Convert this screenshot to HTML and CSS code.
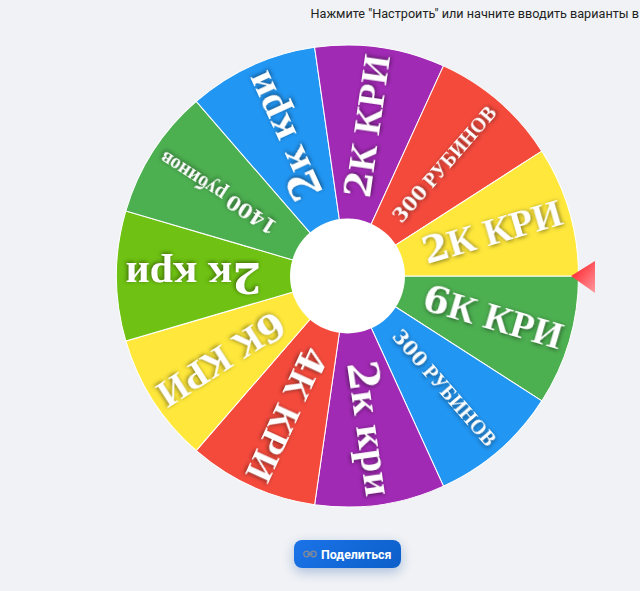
FILE: index.html
```html
<!DOCTYPE html>
<html>
<head>
    <title>Колесо</title>
    <link rel="stylesheet" href="styles.css">
</head>
<body>
    <p class="hint">Нажмите "Настроить" или начните вводить варианты в</p>
    <div class="wheel-box">
        <svg class="wheel" width="640" height="500" viewBox="0 0 640 500">
            <defs>
                <linearGradient id="pointerFill" x1="0" y1="0" x2="1" y2="1">
                    <stop offset="0.3" stop-color="#ff3b41"/>
                    <stop offset="1" stop-color="#ff9aa2"/>
                </linearGradient>
            </defs>
            <g transform="translate(347.5 250)">
                <g class="slices">
                    <path class="green" d="M0 0L231 0A231 231 0 0 1 194.33 124.88Z"/>
                    <path class="blue" transform="rotate(32.727)" d="M0 0L231 0A231 231 0 0 1 194.33 124.88Z"/>
                    <path class="purple" transform="rotate(65.455)" d="M0 0L231 0A231 231 0 0 1 194.33 124.88Z"/>
                    <path class="red" transform="rotate(98.182)" d="M0 0L231 0A231 231 0 0 1 194.33 124.88Z"/>
                    <path class="yellow" transform="rotate(130.909)" d="M0 0L231 0A231 231 0 0 1 194.33 124.88Z"/>
                    <path class="lime" transform="rotate(163.636)" d="M0 0L231 0A231 231 0 0 1 194.33 124.88Z"/>
                    <path class="green" transform="rotate(196.364)" d="M0 0L231 0A231 231 0 0 1 194.33 124.88Z"/>
                    <path class="blue" transform="rotate(229.091)" d="M0 0L231 0A231 231 0 0 1 194.33 124.88Z"/>
                    <path class="purple" transform="rotate(261.818)" d="M0 0L231 0A231 231 0 0 1 194.33 124.88Z"/>
                    <path class="red" transform="rotate(294.545)" d="M0 0L231 0A231 231 0 0 1 194.33 124.88Z"/>
                    <path class="yellow" transform="rotate(327.273)" d="M0 0L231 0A231 231 0 0 1 194.33 124.88Z"/>
                </g>
                <g class="labels">
                    <text class="caps" transform="rotate(16.364)" x="223" y="11"><tspan class="num">6</tspan>К КРИ</text>
                    <text class="tiny" transform="rotate(49.091)" x="221" y="7"><tspan class="num">300</tspan> РУБИНОВ</text>
                    <text class="low" transform="rotate(81.818)" x="222" y="13"><tspan class="num">2</tspan>к кри</text>
                    <text class="caps" transform="rotate(114.545)" x="223" y="11"><tspan class="num">4</tspan>К КРИ</text>
                    <text class="caps" transform="rotate(147.273)" x="223" y="11"><tspan class="num">6</tspan>К КРИ</text>
                    <text class="low" transform="rotate(180)" x="222" y="13"><tspan class="num">2</tspan>к кри</text>
                    <text class="tiny" transform="rotate(212.727)" x="221" y="7"><tspan class="num">1400</tspan> рубинов</text>
                    <text class="low" transform="rotate(245.455)" x="222" y="13"><tspan class="num">2</tspan>к кри</text>
                    <text class="caps" transform="rotate(278.182)" x="223" y="11"><tspan class="num">2</tspan>К КРИ</text>
                    <text class="tiny" transform="rotate(310.909)" x="221" y="7"><tspan class="num">300</tspan> РУБИНОВ</text>
                    <text class="caps" transform="rotate(343.636)" x="223" y="11"><tspan class="num">2</tspan>К КРИ</text>
                </g>
                <circle class="hub" r="57.5"/>
            </g>
            <path d="M571 250L595 235V267Z" fill="url(#pointerFill)"/>
        </svg>
    </div>
    <div class="actions">
        <button class="share-btn">
            <svg class="link-icon" width="14" height="14" viewBox="0 0 14 14">
                <rect x="0.8" y="4.3" width="5.6" height="5.4" rx="2.7"/>
                <rect x="7.6" y="4.3" width="5.6" height="5.4" rx="2.7"/>
                <line x1="4" y1="7" x2="10" y2="7"/>
            </svg>
            Поделиться
        </button>
    </div>
</body>
</html>
```

FILE: styles.css
```css
html, body {
    margin: 0;
    height: 591px;
    overflow: hidden;
}
body {
    background-color: #f0f2f5;
    font-family: Roboto, Arial, sans-serif;
}
.hint {
    margin: 0;
    padding: 6px 0 0 310.5px;
    height: 20px;
    font-size: 12.65px;
    line-height: 15px;
    color: #222;
    white-space: nowrap;
}
.wheel-box {
    height: 500px;
}
.wheel {
    display: block;
}
.slices path {
    stroke: #fff;
    stroke-width: 1;
}
.green { fill: #4caf50; }
.blue { fill: #2196f3; }
.purple { fill: #a12ab4; }
.red { fill: #f44a3c; }
.yellow { fill: #ffe83b; }
.lime { fill: #6fc213; }
.labels text {
    font-family: "Liberation Serif", serif;
    font-weight: bold;
    fill: #fff;
    text-anchor: end;
    filter: drop-shadow(1px 1px 2px rgba(0, 0, 0, 0.5));
}
.labels .num {
    font-family: "DejaVu Serif", serif;
}
.labels .caps { font-size: 38px; }
.labels .low { font-size: 42px; }
.labels .tiny { font-size: 20px; }
.hub {
    fill: #fff;
}
.actions {
    display: flex;
    justify-content: center;
    padding: 14px 0 0 55px;
}
.share-btn {
    display: flex;
    align-items: center;
    gap: 4px;
    width: 107px;
    height: 28px;
    padding: 0 0 0 9px;
    border: none;
    border-radius: 8px;
    background: linear-gradient(135deg, #1a73e8, #0d5fc9);
    box-shadow: 0 4px 12px rgba(13, 71, 161, 0.3);
    color: #fff;
    font-family: Roboto, Arial, sans-serif;
    font-size: 12.4px;
    font-weight: 700;
}
.link-icon rect, .link-icon line {
    fill: none;
    stroke: #7d8a9c;
    stroke-width: 1.4;
}
```
